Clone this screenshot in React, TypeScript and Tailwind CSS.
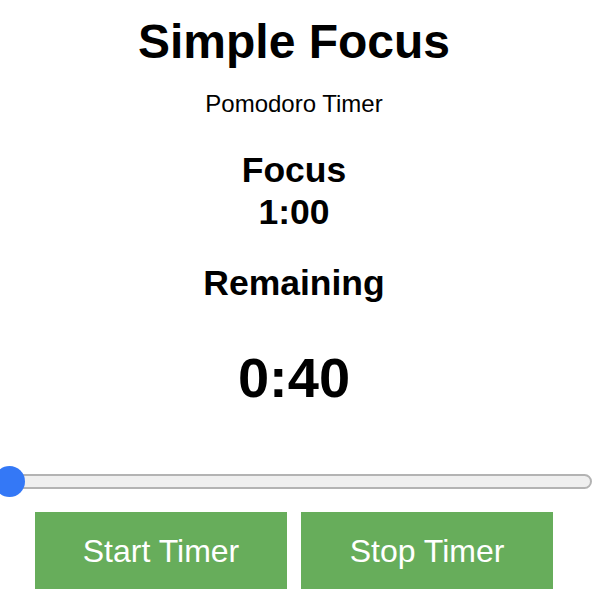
export default function App() {
  return (
    <div className="w-[592px] h-[598px] pr-[4px] bg-white text-black font-['Liberation_Sans',Arial,sans-serif] text-center overflow-hidden">
      <h1 className="pt-[18px] text-[48px] leading-[48px] font-bold">Simple Focus</h1>
      <p className="mt-[26px] text-[24px] leading-[24px]">Pomodoro Timer</p>
      <h2 className="mt-[36px] text-[35.5px] leading-[36px] font-bold">Focus</h2>
      <div className="mt-[6px] text-[35.5px] leading-[36px] font-bold">1:00</div>
      <h2 className="mt-[35px] text-[35.5px] leading-[36px] font-bold">Remaining</h2>
      <div className="mt-[49px] text-[56px] leading-[56px] font-bold">0:40</div>

      <div className="relative mt-[68px] mr-[-4px] h-[15px]">
        <div className="h-[15px] rounded-full border-2 border-[#b3b3b3] bg-[#efefef]" />
        <div className="absolute left-[-6px] top-[-8px] w-[31px] h-[31px] rounded-full bg-[#3478f6]" />
      </div>

      <div className="mt-[23px] grid grid-cols-2 gap-[14px] pl-[35px] pr-[35px]">
        <button className="h-[77px] bg-[#67ad5b] text-white text-[32px]">Start Timer</button>
        <button className="h-[77px] bg-[#67ad5b] text-white text-[32px]">Stop Timer</button>
      </div>
    </div>
  );
}
